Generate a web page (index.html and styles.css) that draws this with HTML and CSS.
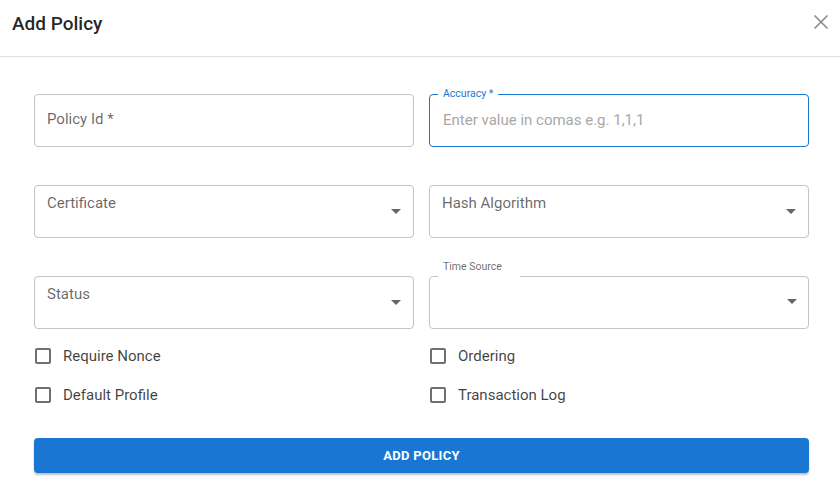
FILE: index.html
```html
<!DOCTYPE html>
<html>
<head>
<meta charset="utf-8">
<link rel="stylesheet" href="styles.css">
</head>
<body>
<div class="dialog">
  <div class="header">
    <h2 class="title">Add Policy</h2>
    <button class="close" aria-label="close">
      <svg width="16" height="16" viewBox="0 0 16 16"><path d="M1.5 1.5 L14.5 14.5 M14.5 1.5 L1.5 14.5" stroke="#8a8a8a" stroke-width="1.6" fill="none"/></svg>
    </button>
  </div>
  <div class="content">
    <div class="grid">
      <div class="field">
        <div class="box"><span class="label">Policy Id *</span></div>
      </div>
      <div class="field">
        <div class="box focused">
          <fieldset class="notch blue"><legend>Accuracy *</legend></fieldset>
          <span class="placeholder">Enter value in comas e.g. 1,1,1</span>
        </div>
      </div>
      <div class="field">
        <div class="box select"><span class="label top">Certificate</span><span class="arrow"></span></div>
      </div>
      <div class="field">
        <div class="box select"><span class="label top">Hash Algorithm</span><span class="arrow"></span></div>
      </div>
      <div class="field">
        <div class="box select"><span class="label top">Status</span><span class="arrow"></span></div>
      </div>
      <div class="field">
        <div class="box select nob">
          <fieldset class="notch wide"><legend></legend></fieldset>
          <span class="float-label">Time Source</span>
          <span class="arrow"></span>
        </div>
      </div>
    </div>
    <div class="checks">
      <label class="check"><span class="cb"></span>Require Nonce</label>
      <label class="check"><span class="cb"></span>Ordering</label>
      <label class="check"><span class="cb"></span>Default Profile</label>
      <label class="check"><span class="cb"></span>Transaction Log</label>
    </div>
    <button class="submit">ADD POLICY</button>
  </div>
</div>
</body>
</html>
```

FILE: styles.css
```css
* { box-sizing: border-box; }
html, body { margin: 0; padding: 0; background: #fff; }
body { font-family: Roboto, "Liberation Sans", sans-serif; color: rgba(0,0,0,0.87); width: 840px; height: 500px; overflow: hidden; }
.dialog { width: 840px; }
.header { height: 57px; border-bottom: 1px solid #e0e0e0; display: flex; align-items: center; justify-content: space-between; padding: 0 12px 0 12px; }
.title { margin: 0; font-size: 19px; font-weight: 500; letter-spacing: 0; margin-top: -9px; color: rgba(0,0,0,0.87); }
.close { border: 0; background: none; padding: 0; margin-top: -13px; margin-right: -1px; width: 16px; height: 16px; display: flex; }
.content { padding: 37px 32px 0 34px; }
.grid { display: grid; grid-template-columns: 380px 380px; column-gap: 15px; row-gap: 38px; }
.field { position: relative; }
.box { position: relative; height: 53px; border: 1px solid #c4c4c4; border-radius: 4px; }
.box.focused, .box.nob { border: none; }
.notch { position: absolute; inset: -6px 0 0 0; margin: 0; padding: 0 8px; border: 1px solid #c4c4c4; border-radius: 4px; pointer-events: none; }
.notch.blue { border-color: #1976d2; }
.notch legend { font-size: 10.5px; padding: 0 5px; color: rgba(0,0,0,0.6); line-height: 12px; }
.notch.blue legend { color: #1976d2; }
.notch.wide { inset: 0; }
.notch.wide legend { width: 82px; height: 1px; padding: 0; line-height: 1px; }
.float-label { position: absolute; left: 14px; top: -15px; font-size: 10.5px; line-height: 12px; color: rgba(0,0,0,0.6); }
.label { position: absolute; left: 12px; top: 15px; font-size: 15px; line-height: 18px; color: rgba(0,0,0,0.6); }
.label.top { top: 8px; }
.placeholder { position: absolute; left: 14px; top: 17px; font-size: 15px; line-height: 18px; color: #a8a8a8; }
.arrow { position: absolute; right: 12px; top: 23px; width: 0; height: 0; border-left: 5px solid transparent; border-right: 5px solid transparent; border-top: 5px solid #666; }
.checks { display: grid; grid-template-columns: 380px 380px; column-gap: 15px; row-gap: 15px; margin-top: 15px; }
.check { display: flex; align-items: center; height: 24px; font-size: 15px; color: rgba(0,0,0,0.75); }
.cb { width: 16px; height: 16px; border: 2px solid #6f6f6f; border-radius: 2px; margin: 0 12px 0 1px; }
.submit { display: block; width: 775px; height: 35px; margin-top: 31px; border: 0; border-radius: 4px; background: #1976d2; color: #fff; font-family: Roboto, "Liberation Sans", sans-serif; font-size: 13px; font-weight: 700; letter-spacing: 0.3px; box-shadow: 0 2px 2px rgba(0,0,0,0.25); }
```
